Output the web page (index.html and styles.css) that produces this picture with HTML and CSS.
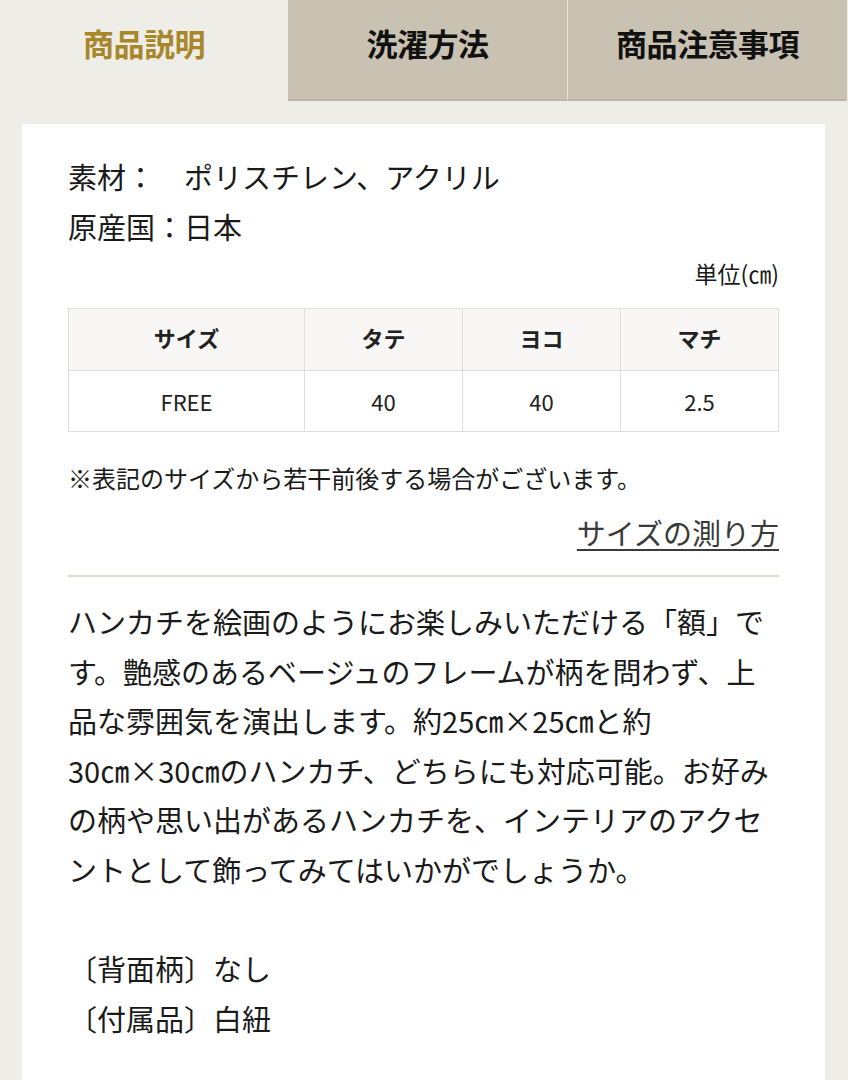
FILE: index.html
```html
<!DOCTYPE html>
<html lang="ja">
<head>
<meta charset="utf-8">
<title>商品説明</title>
<link rel="stylesheet" href="styles.css">
</head>
<body>
<nav class="tabs">
  <div class="tab tab-active">商品説明</div>
  <div class="tab">洗濯方法</div>
  <div class="tab tab-last">商品注意事項</div>
</nav>
<main class="card">
  <p class="spec">素材：　ポリスチレン、アクリル</p>
  <p class="spec">原産国：日本</p>
  <p class="unit">単位(㎝)</p>
  <table class="size-table">
    <thead>
      <tr><th class="col-size">サイズ</th><th>タテ</th><th>ヨコ</th><th>マチ</th></tr>
    </thead>
    <tbody>
      <tr><td>FREE</td><td>40</td><td>40</td><td>2.5</td></tr>
    </tbody>
  </table>
  <p class="note">※表記のサイズから若干前後する場合がございます。</p>
  <p class="link-row"><a class="howto" href="#">サイズの測り方</a></p>
  <hr class="divider">
  <p class="desc">ハンカチを絵画のようにお楽しみいただける「額」です。艶感のあるベージュのフレームが柄を問わず、上品な雰囲気を演出します。約25㎝×25㎝と約30&#8288;㎝&#8288;×&#8288;30&#8288;㎝のハンカチ、どちらにも対応可能。お好みの柄や思い出があるハンカチを、インテリアのアクセントとして飾ってみてはいかがでしょうか。<br><br>〔背面柄〕なし<br>〔付属品〕白紐</p>
</main>
</body>
</html>
```
FILE: styles.css
```css
* { box-sizing: border-box; }
html, body {
  margin: 0;
  padding: 0;
}
body {
  background: #efede8;
  font-family: "Noto Sans CJK JP", "Noto Sans", sans-serif;
  color: #1a1a1a;
  width: 848px;
  height: 1080px;
  overflow: hidden;
}
.tabs {
  display: flex;
  height: 101px;
}
.tab {
  flex: 0 0 280px;
  display: flex;
  align-items: center;
  justify-content: center;
  padding-bottom: 14px;
  background: #c9c2b2;
  border-bottom: 2px solid #bdb6a5;
  font-size: 31px;
  font-weight: 700;
  color: #111;
  letter-spacing: -0.5px;
}
.tab-active {
  flex-basis: 288px;
  background: #efede8;
  border-bottom-color: #efede8;
  color: #a8872a;
}
.tab-last {
  flex-basis: 280px;
  border-left: 1px solid #e9e5dc;
}
.tab:nth-child(2) { flex-basis: 279px; }
.card {
  margin: 23px 23px 0 22px;
  background: #fff;
  padding: 27px 46px 40px;
  min-height: 960px;
}
.spec {
  margin: 0;
  font-size: 29px;
  line-height: 50px;
}
.unit {
  margin: 2px 0 0;
  text-align: right;
  font-size: 23px;
  line-height: 40px;
}
.size-table {
  margin-top: 15px;
  width: 100%;
  border-collapse: collapse;
  table-layout: fixed;
}
.size-table th, .size-table td {
  border: 1.5px solid #dedede;
  text-align: center;
  font-size: 22px;
  color: #222;
}
.size-table th {
  background: #f8f7f5;
  font-weight: 700;
  height: 62px;
  padding: 0 0 6px;
}
.size-table td {
  height: 61px;
}
.col-size { width: 236px; }
.note {
  margin: 26px 0 0;
  font-size: 24px;
  line-height: 40px;
}
.link-row {
  margin: 12px 0 0;
  text-align: right;
  font-size: 29px;
  line-height: 44px;
}
.howto {
  color: #3a3a3a;
  text-decoration: underline;
  text-decoration-thickness: 2px;
  text-underline-offset: 4px;
}
.divider {
  margin: 21px 0 0;
  border: 0;
  height: 2px;
  background: #dcd9cf;
}
.desc {
  margin: 20px 0 0;
  font-size: 29px;
  line-height: 49.6px;
}
```
